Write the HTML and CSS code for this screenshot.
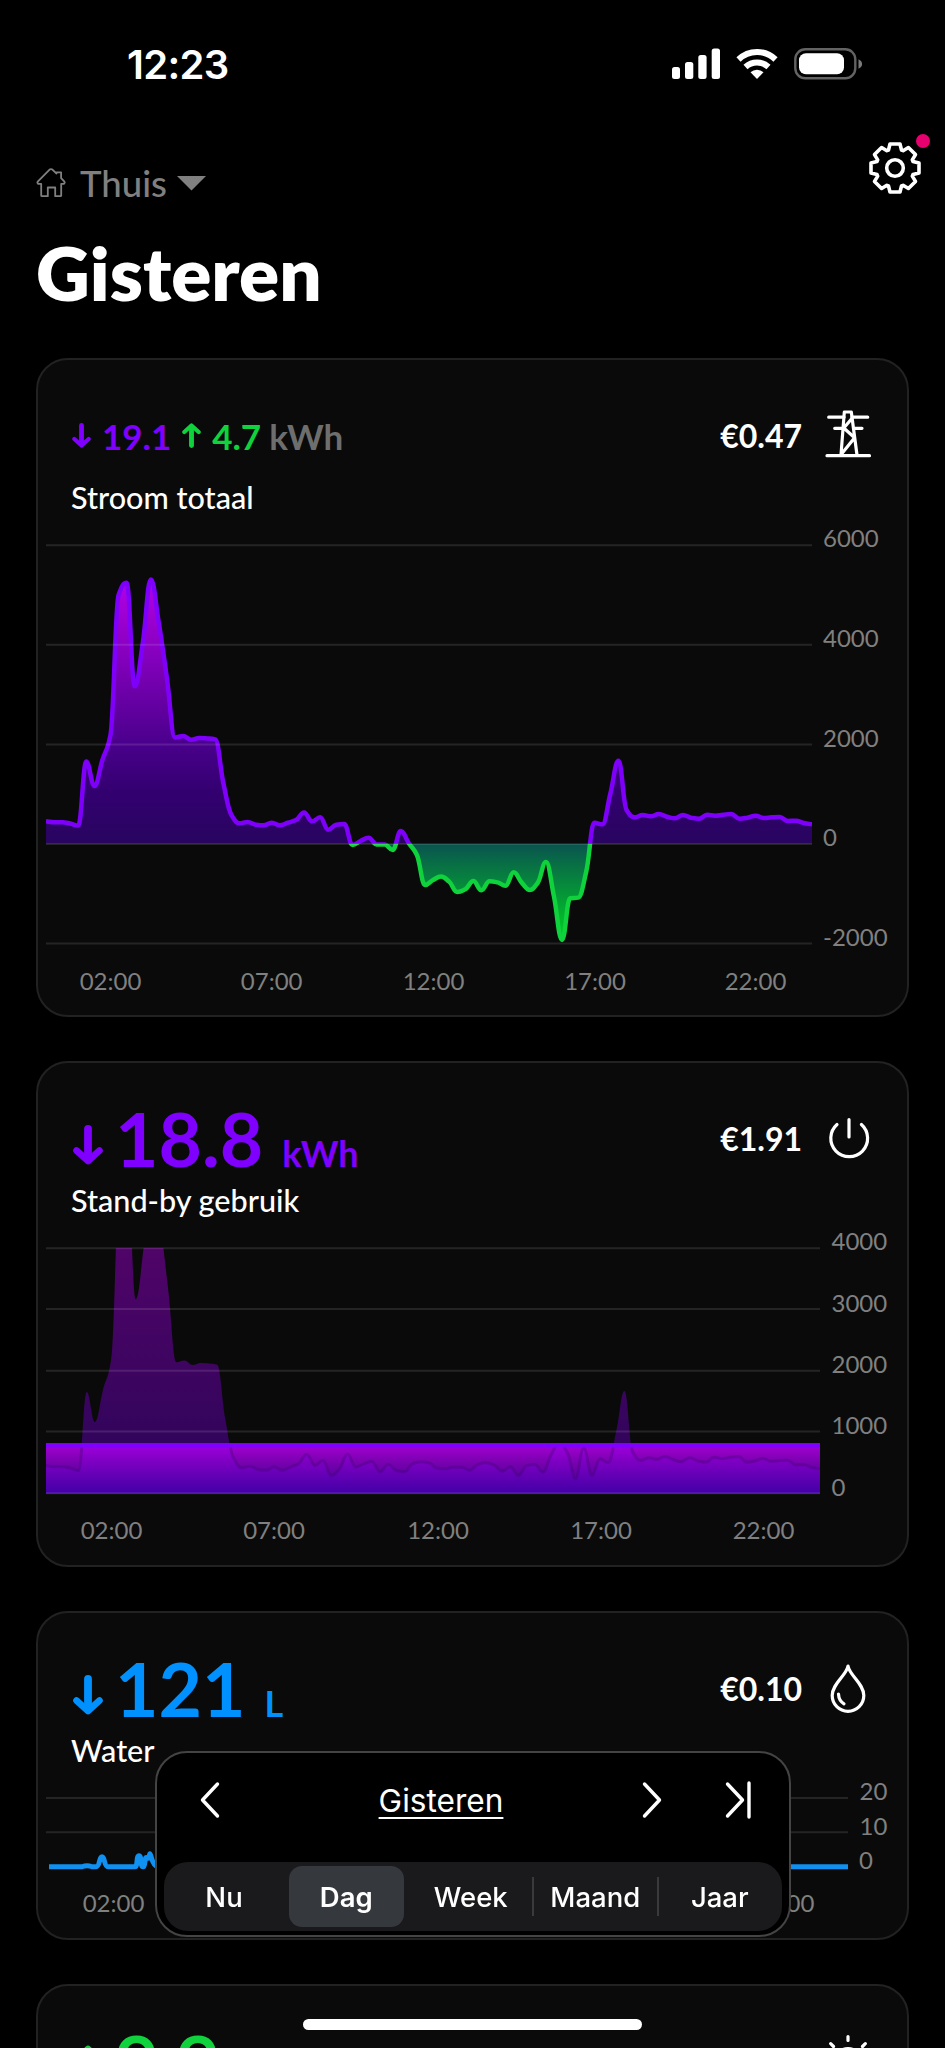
FILE: index.html
```html
<!DOCTYPE html>
<html lang="nl">
<head>
    <meta charset="UTF-8">
    <meta name="viewport" content="width=device-width, initial-scale=1.0">
    <title>Gisteren</title>
    <link rel="stylesheet" href="styles.css">
</head>
<body>
    <div class="status-bar">
        <span class="clock">12:23</span>
        <div class="status-icons">
            <svg width="48" height="32" viewBox="0 0 48 32" fill="#fff">
                <rect x="0" y="19" width="8" height="12" rx="2.5"/>
                <rect x="13" y="14" width="8.3" height="17" rx="2.5"/>
                <rect x="26.3" y="7" width="8.3" height="24" rx="2.5"/>
                <rect x="39.7" y="0.5" width="8.3" height="30.5" rx="2.5"/>
            </svg>
            <svg width="42" height="32" viewBox="0 0 42 32" fill="none" stroke="#fff" stroke-width="6">
                <path d="M2.5 11.5a26.5 26.5 0 0 1 37 0"/>
                <path d="M9.5 19a17 17 0 0 1 23 0"/>
                <path d="M14.5 24.3a9.6 9.6 0 0 1 13 0L21 31z" fill="#fff" stroke="none"/>
            </svg>
            <svg width="69" height="32" viewBox="0 0 69 32">
                <rect x="1.3" y="1.3" width="60" height="29" rx="10" fill="none" stroke="#636363" stroke-width="2.4"/>
                <rect x="5" y="5.3" width="45" height="21" rx="7" fill="#fff"/>
                <path d="M64.5 11.2q3.6 1.8 3.6 4.8t-3.6 4.8z" fill="#7a7a7a"/>
            </svg>
        </div>
    </div>

    <header class="header">
        <div class="location">
            <svg class="home" width="30" height="30" viewBox="0 0 30 30">
                <path d="M13.6 1.6q1.4-1 2.8 0L20.500 5.500V4.400h4.600v5.800l3.300 3.500q.8 1.200-.6 2.200H25.200v11.500q0 .8-.8.800h-5.200v-8.700h-7.400v8.700H6q-.8 0-.8-.8V15.900H2.300q-1.400-1-.6-2.200z"/>
            </svg>
            <span>Thuis</span>
            <svg width="30" height="15" viewBox="0 0 30 15"><path d="M0 0h29L14.500 14.500z" fill="#808080"/></svg>
        </div>
        <div class="settings">
            <svg width="54" height="54" viewBox="-27 -27 54 54">
                <path d="M-6.500-18L-5-24H5L6.500-18L8.100-17.300L13.400-20.500L20.500-13.400L17.300-8.100L18-6.500L24-5V5L18 6.500L17.300 8.100L20.500 13.400L13.400 20.500L8.100 17.300L6.500 18L5 24H-5L-6.500 18L-8.100 17.300L-13.400 20.500L-20.500 13.400L-17.300 8.100L-18 6.500L-24 5V-5L-18-6.500L-17.300-8.100L-20.500-13.400L-13.400-20.500L-8.100-17.300Z"/>
                <circle r="8.300"/>
            </svg>
            <span class="dot"></span>
        </div>
        <h1>Gisteren</h1>
    </header>

    <main class="cards">
        <section class="card">
            <div class="card-header">
                <div class="value small">
                    <svg class="arrow purple" viewBox="0 0 30 40"><path d="M15 4v30"/><path class="head" d="M3.500 25.500L15 36l11.500-10.500"/></svg>
                    <span class="purple">19.1</span>
                    <svg class="arrow up green" viewBox="0 0 30 40"><path d="M15 36V6"/><path class="head" d="M3.500 14.500L15 4l11.500 10.500"/></svg>
                    <span class="green">4.7</span>
                    <span class="unit grey">kWh</span>
                </div>
                <div class="cost">
                    <span>€0.47</span>
                    <svg class="icon" viewBox="0 0 48 48">
                        <path d="M4.700 6.200H20M28 6.200h15.700M10.700 17.300h8M31 17.300h7M3 44.700h42.500"/>
                        <path d="M17 44L20.300 1h7L33 44M28.300 7l-8.500 10 10.800 9.700L17.500 43"/>
                    </svg>
                </div>
                <div class="name">Stroom totaal</div>
            </div>
            <svg class="chart" height="495" viewBox="0 0 869 495">
                <defs>
                    <linearGradient id="usage" gradientUnits="userSpaceOnUse" x1="0" y1="60" x2="0" y2="324">
                        <stop offset="0" stop-color="#b400e6"/>
                        <stop offset="0.35" stop-color="#7a00b4"/>
                        <stop offset="0.62" stop-color="#4a008c"/>
                        <stop offset="0.8" stop-color="#330070"/>
                        <stop offset="1" stop-color="#28055f"/>
                    </linearGradient>
                    <linearGradient id="feed" gradientUnits="userSpaceOnUse" x1="0" y1="324" x2="0" y2="420">
                        <stop offset="0" stop-color="#0a544e"/>
                        <stop offset="1" stop-color="#00d222"/>
                    </linearGradient>
                    <clipPath id="above"><rect x="8" y="0" width="766" height="324"/></clipPath>
                    <clipPath id="below"><rect x="8" y="324" width="766" height="120"/></clipPath>
                </defs>
                <g clip-path="url(#above)">
                    <path class="total-area" fill="url(#usage)"/>
                    <path class="total-line line" stroke="#7f00fa"/>
                </g>
                <g clip-path="url(#below)">
                    <path class="total-area" fill="url(#feed)"/>
                    <path class="total-line line" stroke="#0fd23c"/>
                </g>
                <path class="grid" d="M8 25.300h766M8 124.800h766M8 224.400h766M8 324h766M8 423.600h766"/>
                <g class="labels">
                    <text x="785" y="27">6000</text>
                    <text x="785" y="127">4000</text>
                    <text x="785" y="227">2000</text>
                    <text x="785" y="326">0</text>
                    <text x="785" y="426">-2000</text>
                </g>
                <g class="labels hours">
                    <text x="72.500" y="470">02:00</text>
                    <text x="233.700" y="470">07:00</text>
                    <text x="395.500" y="470">12:00</text>
                    <text x="557" y="470">17:00</text>
                    <text x="717.500" y="470">22:00</text>
                </g>
            </svg>
        </section>

        <section class="card">
            <div class="card-header">
                <div class="value purple">
                    <svg class="arrow" viewBox="0 0 30 40"><path d="M15 4v30"/><path class="head" d="M3.500 25.500L15 36l11.500-10.500"/></svg>
                    <span>18.8</span>
                    <span class="unit">kWh</span>
                </div>
                <div class="cost">
                    <span>€1.91</span>
                    <svg class="icon" viewBox="0 0 48 48"><path d="M25 5.500V23M13 10.500a18.400 18.400 0 1 0 24.400 0"/></svg>
                </div>
                <div class="name">Stand-by gebruik</div>
            </div>
            <svg class="chart" height="342" viewBox="0 0 869 342">
                <defs>
                    <linearGradient id="faded" gradientUnits="userSpaceOnUse" x1="0" y1="25" x2="0" y2="270">
                        <stop offset="0" stop-color="#500468"/>
                        <stop offset="1" stop-color="#2a0558"/>
                    </linearGradient>
                    <linearGradient id="band" x1="0" y1="0" x2="0" y2="1">
                        <stop offset="0" stop-color="#b400e6"/>
                        <stop offset="0.35" stop-color="#8600c0"/>
                        <stop offset="1" stop-color="#38009a"/>
                    </linearGradient>
                    <clipPath id="plot-clip"><rect x="8" y="25" width="774" height="246"/></clipPath>
                    <clipPath id="band-clip"><rect x="8" y="220" width="774" height="51"/></clipPath>
                </defs>
                <path class="standby-area" fill="url(#faded)" clip-path="url(#plot-clip)"/>
                <g clip-path="url(#band-clip)">
                    <rect x="8" y="220" width="774" height="51" fill="url(#band)" fill-opacity="0.92"/>
                    <path class="standby-area" fill="#7a00ff" fill-opacity="0.16"/>
                    <path class="standby-line" fill="none" stroke="#3c0070" stroke-opacity="0.3" stroke-width="3"/>
                    <rect x="8" y="220" width="774" height="4.500" fill="#7f00ff"/>
                </g>
                <path class="grid" d="M8 25.300h774M8 86h774M8 147.700h774M8 208.500h774M8 270.300h774"/>
                <g class="labels">
                    <text x="793.500" y="27">4000</text>
                    <text x="793.500" y="89">3000</text>
                    <text x="793.500" y="150">2000</text>
                    <text x="793.500" y="211">1000</text>
                    <text x="793.500" y="272.500">0</text>
                </g>
                <g class="labels hours">
                    <text x="73.500" y="316">02:00</text>
                    <text x="236" y="316">07:00</text>
                    <text x="400" y="316">12:00</text>
                    <text x="563" y="316">17:00</text>
                    <text x="725.500" y="316">22:00</text>
                </g>
            </svg>
        </section>

        <section class="card">
            <div class="card-header">
                <div class="value blue">
                    <svg class="arrow" viewBox="0 0 30 40"><path d="M15 4v30"/><path class="head" d="M3.500 25.500L15 36l11.500-10.500"/></svg>
                    <span>121</span>
                    <span class="unit">L</span>
                </div>
                <div class="cost">
                    <span>€0.10</span>
                    <svg class="icon" viewBox="0 0 48 48">
                        <path d="M24 2C22.500 11.500 8.200 19.500 8.200 31.500a15.800 15.800 0 0 0 31.600 0C39.800 19.500 25.500 11.500 24 2z"/>
                        <path d="M14.500 30q.3 6.800 5.500 9.800"/>
                    </svg>
                </div>
                <div class="name">Water</div>
            </div>
            <svg class="chart" height="165" viewBox="0 0 869 165">
                <path class="grid" d="M8 25h802M8 59.300h802"/>
                <path d="M11 93.800h33q5-2 10 0h4c4 0 3-10 6-10s2 10 6 10h27c3 0 1-11 4-11s1 11 4 11 1-11 4-9 2-4 3-4 2 13 8 13h690" fill="none" stroke="#1090f0" stroke-width="5"/>
                <g class="labels">
                    <text x="821.500" y="27">20</text>
                    <text x="821.500" y="62">10</text>
                    <text x="821" y="96">0</text>
                </g>
                <g class="labels hours">
                    <text x="75.500" y="139">02:00</text>
                    <text x="745.500" y="139">22:00</text>
                </g>
            </svg>
        </section>

        <section class="card">
            <div class="card-header">
                <div class="value green">
                    <svg class="arrow up" viewBox="0 0 30 40"><path d="M15 36V6"/><path class="head" d="M3.500 14.500L15 4l11.500 10.500"/></svg>
                    <span>9.9</span>
                </div>
                <div class="cost">
                    <svg class="icon" viewBox="0 0 48 48">
                        <circle cx="24" cy="24" r="12.500"/>
                        <path d="M24-.5v4M24 44.500v4M-.5 24h4M44.500 24h4M6.700 6.700l2.800 2.800M38.500 38.500l2.800 2.800M41.300 6.700l-2.800 2.800M9.500 38.500l-2.800 2.800"/>
                    </svg>
                </div>
            </div>
        </section>
    </main>

    <!-- Period picker, floats over the cards -->
    <nav class="picker">
        <div class="picker-nav">
            <svg class="chevron" width="20" height="38" viewBox="0 0 20 38"><path d="M17.500 3L2.500 19l15 16"/></svg>
            <span class="period">Gisteren</span>
            <svg class="chevron next" width="20" height="38" viewBox="0 0 20 38"><path d="M2.500 3l15 16-15 16"/></svg>
            <svg class="chevron last" width="26" height="38" viewBox="0 0 26 38"><path d="M2.500 3l15 16-15 16M24 2v34"/></svg>
        </div>
        <div class="segments">
            <button class="first">Nu</button>
            <button class="active">Dag</button>
            <button>Week</button>
            <button class="divided">Maand</button>
            <button class="divided">Jaar</button>
        </div>
    </nav>
    <div class="home-indicator"></div>

    <script src="script.js"></script>
</body>
</html>
```
FILE: styles.css
```css
* {
    box-sizing: border-box;
}

body {
    font-family: Lato, sans-serif;
    margin: 0;
    height: 2048px;
    overflow: hidden;
    background-color: #000;
    color: #fff;
}

svg {
    display: block;
    flex: none;
}

/* Status bar */
.status-bar {
    display: flex;
    justify-content: space-between;
    align-items: center;
    height: 128px;
    padding: 0 82px 0 127px;
}

.clock {
    font-family: Inter, sans-serif;
    font-size: 40px;
    font-weight: 600;
    letter-spacing: -0.7px;
}

.status-icons {
    display: flex;
    gap: 16px;
}

/* Header */
.header {
    display: grid;
    grid-template-columns: 1fr auto;
    height: 230px;
    padding: 0 23px 0 36px;
    align-content: start;
}

.location {
    display: flex;
    align-items: center;
    height: 110px;
    color: #808080;
    font-size: 36.5px;
    font-weight: 500;
}

.location span {
    margin: 0 10px 0 14px;
}

.home {
    fill: none;
    stroke: #808080;
    stroke-width: 1.8;
    stroke-linejoin: round;
}

.settings {
    position: relative;
    margin-top: 13px;
    height: 54px;
}

.settings svg {
    fill: none;
    stroke: #fff;
    stroke-width: 3.6;
    stroke-linejoin: round;
}

.dot {
    position: absolute;
    right: -8px;
    top: -7px;
    width: 14px;
    height: 14px;
    border-radius: 50%;
    background-color: #e8006f;
}

h1 {
    margin: -11px 0 0;
    font-size: 74.5px;
    font-weight: 800;
    line-height: 90px;
}

/* Cards */
.cards {
    display: flex;
    flex-direction: column;
    gap: 44px;
    padding: 0 36px;
}

.card {
    border: 2px solid #222;
    border-radius: 32px;
    background-color: #0a0a0a;
    width: 873px;
}

.card-header {
    display: grid;
    grid-template-columns: 1fr auto;
    height: 160px;
    padding: 30px 35px 0 33px;
    align-content: start;
}

.value {
    display: flex;
    align-items: baseline;
    height: 90px;
    font-size: 75px;
    font-weight: 700;
    line-height: 90px;
}

.value .arrow {
    width: 30px;
    height: 40px;
    margin: 0 12px 0 2px;
    transform: translateY(-2px);
}

.value .arrow.up {
    transform: translateY(-5px);
}

.arrow {
    fill: none;
    stroke: currentColor;
    stroke-width: 7.8;
    stroke-linecap: round;
    stroke-linejoin: round;
}

.arrow .head {
    stroke-width: 6.6;
}

.unit {
    font-size: 36px;
    margin-left: 19px;
}

.value.small {
    align-items: center;
    padding-top: 1px;
    font-size: 35px;
}

.value.small .arrow {
    width: 19px;
    height: 25px;
    margin: 0 11px 0 1px;
    transform: none;
}

.value.small .arrow.up {
    margin-left: 11px;
}

.value.small .unit {
    margin-left: 8px;
    font-size: 35px;
}

.purple {
    color: #7f00ff;
}

.green {
    color: #10d23c;
}

.blue {
    color: #0091ff;
}

.grey {
    color: #6e6e6e;
}

.cost {
    display: flex;
    align-items: center;
    gap: 22px;
    height: 48px;
    margin-top: 21px;
    font-size: 32px;
    font-weight: 700;
}

.icon {
    width: 48px;
    height: 48px;
    overflow: visible;
    fill: none;
    stroke: #fff;
    stroke-width: 3.2;
    stroke-linecap: round;
    stroke-linejoin: round;
}

.name {
    grid-column: 1 / 3;
    font-size: 30.6px;
    font-weight: 500;
    line-height: 36px;
}

/* Charts */
.chart {
    width: 869px;
}

.grid {
    stroke: #fff;
    stroke-opacity: 0.11;
    stroke-width: 2;
}

.line {
    fill: none;
    stroke-width: 4.5;
    stroke-linejoin: round;
}

.labels {
    fill: #808080;
    font-size: 24px;
}

.hours {
    text-anchor: middle;
}

/* Period picker */
.picker {
    position: fixed;
    left: 155px;
    top: 1751px;
    width: 636px;
    height: 186px;
    padding: 0 7px 5px;
    border: 2px solid #444;
    border-radius: 32px;
    background-color: #000;
    font-family: Inter, sans-serif;
}

.picker-nav {
    display: flex;
    align-items: center;
    height: 93px;
    padding: 0 31px 0 36px;
}

.chevron {
    fill: none;
    stroke: #fff;
    stroke-width: 3.4;
    stroke-linecap: round;
    stroke-linejoin: round;
}

.period {
    margin: 0 auto;
    padding: 1px 0 0;
    font-size: 31.6px;
    text-decoration: underline;
    text-decoration-thickness: 2px;
    text-underline-offset: 5px;
}

.chevron.next {
    margin-left: -20px;
}

.chevron.last {
    margin-left: 63px;
}

.segments {
    display: flex;
    height: 69px;
    margin-top: 16px;
    padding: 4px 0;
    border-radius: 24px;
    background-color: #1a1a1c;
}

.segments button {
    flex: 1;
    margin: 0 5px;
    padding: 0;
    border: none;
    border-radius: 13px;
    background: none;
    color: #fff;
    font-family: Inter, sans-serif;
    font-size: 27.5px;
    font-weight: 500;
    position: relative;
    cursor: pointer;
}

.segments .first {
    flex: 0 0 110px;
}

.segments .active {
    background-color: #35383d;
    font-weight: 600;
}

.segments .divided::before {
    content: "";
    position: absolute;
    left: -6px;
    top: 11px;
    width: 2px;
    height: 39px;
    background-color: #3a3a3d;
}

.home-indicator {
    position: fixed;
    left: 303px;
    top: 2019px;
    width: 339px;
    height: 11px;
    border-radius: 6px;
    background-color: #fff;
}
```
FILE: script.js
```js
// Watts, 96 readings over the day
const total = [
    455, 435, 435, 410, 370, 1655, 1165, 1690, 2190, 5000, 5245, 3170, 4030, 5310, 4430, 3325,
    2140, 2168, 2095, 2128, 2120, 2100, 1218, 582, 415, 442, 388, 375, 428, 375, 428, 480,
    635, 455, 535, 288, 388, 400, -20, 60, 127, -10, -10, -120, 260, 15, -220, -823,
    -722, -655, -756, -963, -910, -743, -930, -750, -770, -836, -569, -776, -923, -776, -361, -1057,
    -1926, -1090, -1077, -555, 428, 395, 1017, 1672, 682, 535, 582, 555, 602, 548, 515, 582,
    528, 508, 589, 569, 589, 602, 508, 528, 569, 522, 535, 542, 462, 468, 421, 395
];

// Household usage differs from the grid total while the sun is up
const standby = total.slice();
[
    640, 430, 480, 520, 350, 470, 370, 350, 480, 515, 495, 410, 400, 425, 425, 375,
    470, 500, 460, 360, 430, 290, 450, 470, 345, 630, 820, 660, 235, 740, 290, 560, 500
].forEach((v, i) => standby[37 + i] = v);

// Monotone cubic curve through the points
function curve(points) {
    const n = points.length;
    const slope = [];
    for (let i = 0; i < n - 1; i++) {
        slope.push((points[i + 1][1] - points[i][1]) / (points[i + 1][0] - points[i][0]));
    }
    const tan = points.map((p, i) => {
        if (i === 0) return slope[0];
        if (i === n - 1) return slope[n - 2];
        const a = slope[i - 1], b = slope[i];
        return a * b <= 0 ? 0 : 2 * a * b / (a + b);
    });
    let d = `M${points[0][0]} ${points[0][1]}`;
    for (let i = 0; i < n - 1; i++) {
        const [x0, y0] = points[i];
        const [x1, y1] = points[i + 1];
        const h = (x1 - x0) * 0.42;
        d += `C${x0 + h} ${y0 + tan[i] * h} ${x1 - h} ${y1 - tan[i + 1] * h} ${x1} ${y1}`;
    }
    return d;
}

function drawChart(name, data, left, right, zero, pxPerWatt) {
    const step = (right - left) / (data.length - 1);
    const d = curve(data.map((v, i) => [left + i * step, zero - v * pxPerWatt]));
    document.querySelectorAll(`.${name}-line`).forEach(el => el.setAttribute('d', d));
    document.querySelectorAll(`.${name}-area`).forEach(el => el.setAttribute('d', `${d}L${right} ${zero}L${left} ${zero}Z`));
}

drawChart('total', total, 8, 774, 324, 0.0498);
drawChart('standby', standby, 8, 782, 270.3, 0.0612);
```
